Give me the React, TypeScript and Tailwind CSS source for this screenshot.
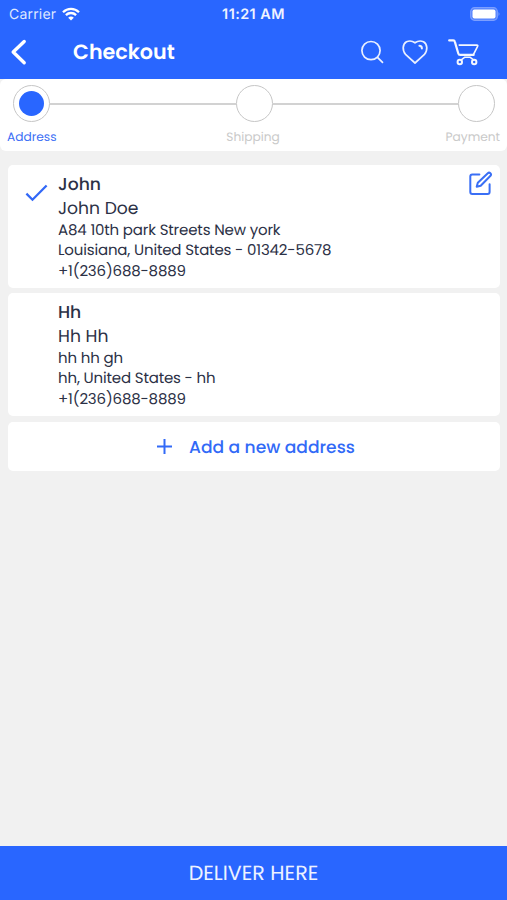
import type { ReactNode } from "react";

const poppins = "font-['Poppins','Inter',sans-serif] whitespace-nowrap [text-rendering:geometricPrecision]";

function Dot({ active }: { active?: boolean }) {
  return (
    <div className="flex size-[37px] shrink-0 items-center justify-center rounded-full border-[1.5px] border-[#c6c6c6] bg-white">
      {active && <div className="size-[25px] rounded-full bg-[#2966ff]" />}
    </div>
  );
}

function Card({ children, className = "" }: { children: ReactNode; className?: string }) {
  return <section className={`flex rounded-[5px] bg-white ${className}`}>{children}</section>;
}

function Address({ title, name, lines }: { title: string; name: string; lines: string[] }) {
  return (
    <div className="flex-1 pt-[7.6px]">
      <h2 className="text-[17.2px] font-medium leading-6">{title}</h2>
      <p className="text-[17.2px] leading-6">{name}</p>
      {lines.map((line) => (
        <p key={line} className="text-[15px] leading-[20.7px] tracking-[-0.16px]">{line}</p>
      ))}
    </div>
  );
}

export default function App() {
  return (
    <div className={`flex h-[900px] w-[507px] flex-col overflow-hidden bg-[#f1f1f1] text-[#2c3146] ${poppins}`}>
      <header className="h-[79px] shrink-0 bg-[#2966ff] text-white">
        <div className="grid h-7 grid-cols-3 items-center pl-[9px] pr-[7px] font-['Inter',sans-serif]">
          <div className="flex items-center gap-1.5 text-[#dfe8ff]">
            <span className="text-[14px] tracking-[0.2px]">Carrier</span>
            <svg width="18" height="14" viewBox="0 0 18 14" fill="none" stroke="white" strokeWidth="2.3">
              <path d="M1 5.2C5.6.7 12.4.7 17 5.2M3.9 8.1c2.9-2.8 7.3-2.8 10.2 0" />
              <path d="M9 13.5 6.2 10.7c1.6-1.5 4-1.5 5.6 0Z" fill="white" stroke="none" />
            </svg>
          </div>
          <div className="pr-0.5 pt-px text-center text-[14.4px] font-semibold tracking-[0.45px] text-[#eff3ff]">11:21 AM</div>
          <svg className="justify-self-end" width="30" height="14" viewBox="0 0 30 14">
            <rect x=".7" y=".7" width="26.6" height="12.6" rx="3.8" fill="#5583ff" stroke="#7c9fff" strokeWidth="1.2" />
            <rect x="2.5" y="2.4" width="23" height="9.2" rx="2" fill="white" />
            <path d="M28.5 5q2 2 0 4Z" fill="#7c9fff" />
          </svg>
        </div>
        <div className="flex h-12 items-center">
          <svg className="ml-[9px]" width="19" height="28" viewBox="0 0 19 28" fill="none" stroke="white" strokeWidth="3.4" strokeLinecap="round" strokeLinejoin="round">
            <path d="M15.2 3.5 4.2 14l11 10.7" />
          </svg>
          <h1 className="ml-[45px] w-[110px] pt-0.5 text-[20.7px] font-semibold">Checkout</h1>
          <svg className="ml-[177px]" width="26" height="26" viewBox="0 0 26 26" fill="none" stroke="#eaf0ff" strokeWidth="1.7" strokeLinecap="round">
            <circle cx="11" cy="11.6" r="9.1" />
            <path d="m17.5 18.3 5 5" />
          </svg>
          <svg className="ml-[15px]" width="28" height="28" viewBox="0 0 28 28" fill="none" stroke="#eaf0ff" strokeWidth="1.7" strokeLinecap="round" strokeLinejoin="round">
            <path d="M14 25 4.8 16.7C.8 12.3 1.7 5.9 5.5 3.8c2.9-1.3 5.9-.9 8.5 1 2.6-1.9 5.6-2.3 8.5-1 3.8 2.1 4.7 8.5.7 12.9Z" />
            <path d="M18.4 7.8c1.4 0 2.5 1.2 2.5 2.7" strokeWidth="2" />
          </svg>
          <svg className="ml-[18px]" width="34" height="28" viewBox="0 0 34 28" fill="none" stroke="#f4f7ff" strokeLinecap="round" strokeLinejoin="round">
            <path d="M2.2 2.4h4.1c.8 0 1.3.4 1.5 1.2l3.5 11.9c.3 1 .8 1.4 1.8 1.4h13.5" strokeWidth="2.2" />
            <path d="M12.2 7.1h17.7q1.3 0 .7 1.2l-4.2 8.4" strokeWidth="1.6" />
            <path d="m13.9 22.1 4-2.9h5l4 2.9" strokeWidth="1.5" />
            <circle cx="12.8" cy="24" r="2.2" strokeWidth="2" />
            <circle cx="27.2" cy="24" r="2.2" strokeWidth="2" />
          </svg>
        </div>
      </header>

      <nav className="h-[72px] shrink-0 rounded-md bg-white pt-1.5">
        <div className="flex items-center pl-[13px] pr-3">
          <Dot active />
          <div className="h-[2px] flex-1 bg-[#d2d2d2]" />
          <Dot />
          <div className="h-[2px] flex-1 bg-[#d2d2d2]" />
          <Dot />
        </div>
        <div className="grid grid-cols-[1fr_auto_1fr] pl-[7px] pr-[7px] pt-[7px] text-[12.2px] leading-[18px] text-[#c9c9c9]">
          <span className="text-[#3a6ef5]">Address</span>
          <span className="-ml-px">Shipping</span>
          <span className="text-right">Payment</span>
        </div>
      </nav>

      <main className="flex flex-1 flex-col pl-2 pr-[7px] pt-[14px]">
        <Card className="h-[123px]">
          <svg className="ml-[17px] mt-[16px]" width="24" height="24" viewBox="0 0 24 24" fill="none" stroke="#3268f7" strokeWidth="2.3">
            <path d="m1.4 12.6 6.1 6.1L21.6 4.5" />
          </svg>
          <div className="w-[9px]" />
          <Address title="John" name="John Doe" lines={["A84 10th park Streets New york", "Louisiana, United States - 01342-5678", "+1(236)688-8889"]} />
          <svg className="mr-[7px] mt-[6px]" width="25" height="25" viewBox="0 0 25 25" fill="none" stroke="#3a6ff5" strokeWidth="2" strokeLinecap="round" strokeLinejoin="round">
            <path d="M11.4 3.6H4.3c-1.2 0-2 .8-2 2v15.3c0 1.2.8 2 2 2h15.3c1.2 0 2-.8 2-2v-7.6" />
            <path d="M19.8 2.2c1.7-1.5 4.2.9 2.7 2.6L12.7 14.7l-4 1.1 1.1-4Z" />
          </svg>
        </Card>
        <Card className="mt-[5px] h-[123px] pl-[50px]">
          <Address title="Hh" name="Hh Hh" lines={["hh hh gh", "hh, United States - hh", "+1(236)688-8889"]} />
        </Card>
        <Card className="mt-[6px] h-[49px] items-center text-[#326af7]">
          <svg className="ml-[148px]" width="17" height="17" viewBox="0 0 17 17" stroke="currentColor" strokeWidth="2">
            <path d="M8.5 1v15M1 8.5h15" />
          </svg>
          <span className="ml-[16px] pt-0.5 text-[17.1px] font-medium">Add a new address</span>
        </Card>
      </main>

      <footer className="flex h-[54px] shrink-0 items-center justify-center bg-[#2966ff] pt-0.5 text-[20.6px] text-[#edf2ff]">
        <span>DELIVER HERE</span>
      </footer>
    </div>
  );
}
